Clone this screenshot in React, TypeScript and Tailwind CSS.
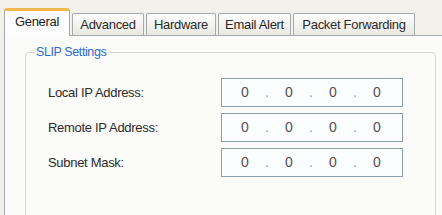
const tabs = [
  { label: 'General', w: 'w-[66px]' },
  { label: 'Advanced', w: 'w-[72px]' },
  { label: 'Hardware', w: 'w-[70px]' },
  { label: 'Email Alert', w: 'w-[73px]' },
  { label: 'Packet Forwarding', w: 'w-[122px]' },
];

const rows = ['Local IP Address:', 'Remote IP Address:', 'Subnet Mask:'];

function IpBox() {
  return (
    <div className="flex h-[29px] w-[182px] items-center border border-[#8d9fb3] bg-[#fcfdfe] pl-[5px] text-[14px] text-[#505050]">
      <span className="w-[36px] text-center">0</span>
      <span className="w-[8px] text-center text-[#9a9a9a]">.</span>
      <span className="w-[36px] text-center">0</span>
      <span className="w-[8px] text-center text-[#9a9a9a]">.</span>
      <span className="w-[36px] text-center">0</span>
      <span className="w-[8px] text-center text-[#9a9a9a]">.</span>
      <span className="w-[36px] text-center">0</span>
    </div>
  );
}

export default function App() {
  return (
    <div
      className="h-[215px] w-[442px] overflow-hidden bg-[#f1f0ea] pl-[4px] pt-[8px]"
      style={{ fontFamily: '"Liberation Sans", Arial, sans-serif' }}
    >
      <div className="flex h-[27px] items-end">
        {tabs.map((t, i) =>
          i === 0 ? (
            <div
              key={t.label}
              className={`relative z-10 -mb-px flex h-[28px] ${t.w} items-center justify-center rounded-t-[3px] border-x border-t-[3px] border-x-[#a3aab0] border-t-[#f2b84b] bg-[#fcfcfc] pb-[3px] text-[13px] tracking-[-0.3px] text-[#222]`}
            >
              {t.label}
            </div>
          ) : (
            <div
              key={t.label}
              className={`ml-[2px] flex h-[22px] ${t.w} items-center justify-center rounded-t-[2px] border-x border-t border-[#a3aab0] bg-gradient-to-b from-[#fdfdfd] to-[#e9e8e2] text-[13px] tracking-[-0.3px] text-[#2a2a2a]`}
            >
              {t.label}
            </div>
          ),
        )}
      </div>
      <div className="w-[460px] border border-[#a3aab0] bg-[#fbfbfa] pl-[20px] pt-[9px]">
        <fieldset className="w-[411px] rounded-[4px] border border-[#d6d4cb] pb-[40px] pl-[22px] pt-[19px]">
          <legend className="-ml-[14px] px-[2px] text-[12.5px] leading-[14px] tracking-[-0.4px] text-[#2c6ad6]">
            SLIP Settings
          </legend>
          <div className="flex flex-col gap-[6px]">
            {rows.map((r) => (
              <div key={r} className="flex items-center">
                <span className="w-[173px] text-[13px] tracking-[-0.3px] text-[#2b2b2b]">{r}</span>
                <IpBox />
              </div>
            ))}
          </div>
        </fieldset>
      </div>
    </div>
  );
}
